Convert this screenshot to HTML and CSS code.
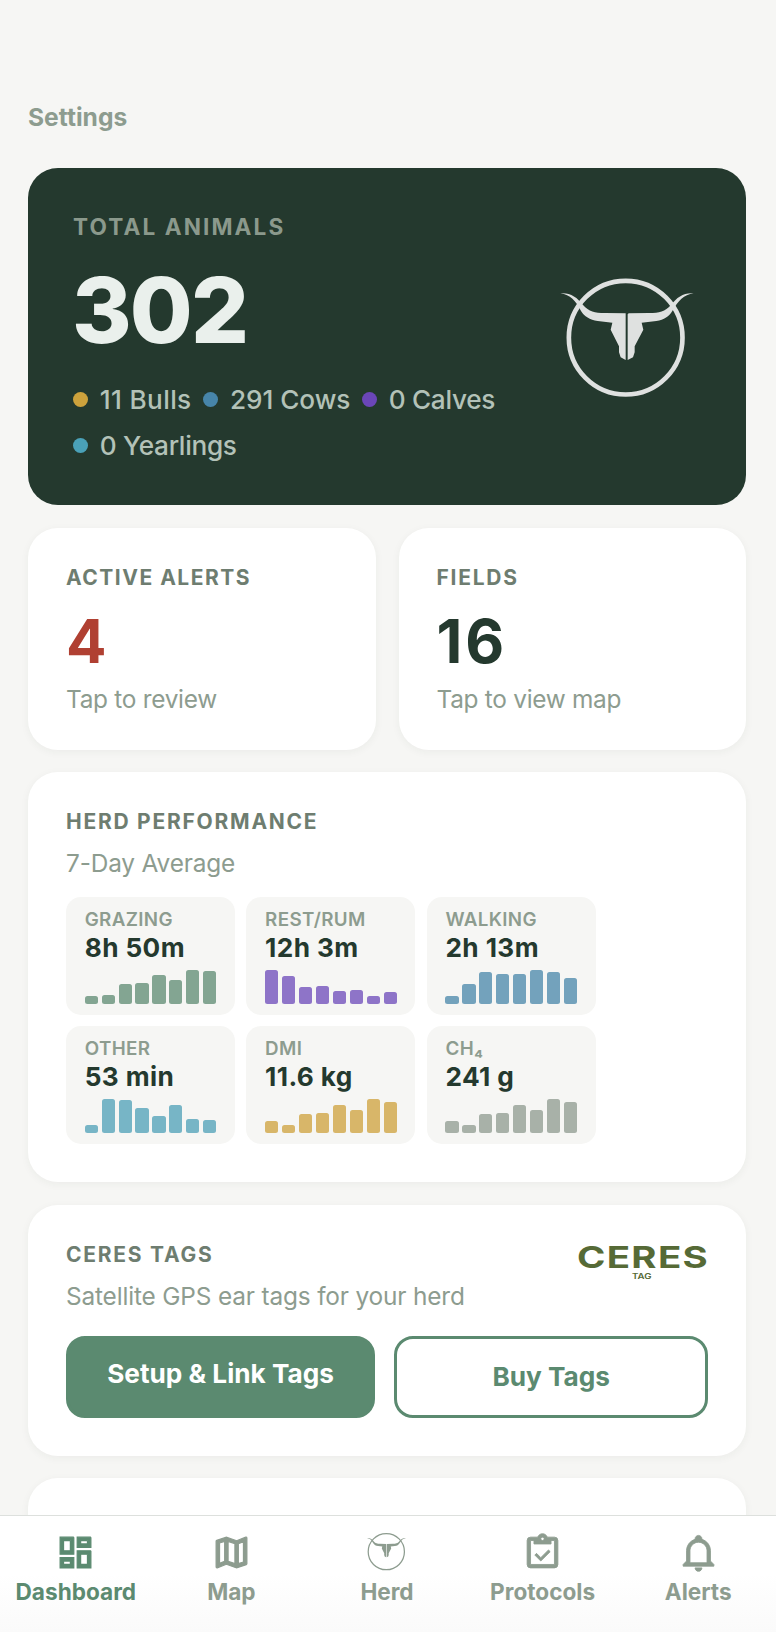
FILE: index.html
```
<!DOCTYPE html>
<html lang="en">
<head>
    <meta charset="UTF-8">
    <meta name="viewport" content="width=device-width, initial-scale=1.0">
    <title>Herd Dashboard</title>
    <link rel="stylesheet" href="styles.css">
</head>
<body>

<main class="content">
    <a class="settings">Settings</a>

    <section class="hero">
        <div class="hero-info">
            <div class="hero-label">TOTAL ANIMALS</div>
            <div class="hero-total">302</div>
            <div class="breakdown">
                <span class="stat"><i class="dot bulls"></i>11 Bulls</span>
                <span class="stat"><i class="dot cows"></i>291 Cows</span>
                <span class="stat"><i class="dot calves"></i>0 Calves</span>
                <span class="stat"><i class="dot yearlings"></i>0 Yearlings</span>
            </div>
        </div>
        <svg class="hero-logo" viewBox="58 50 408 364">
            <circle cx="258" cy="232" r="170.5" fill="none" stroke="currentColor" stroke-width="14"/>
            <g id="skull" fill="currentColor">
                <path d="M62 99C90 96 112 110 130 134C148 154 165 158 195 158L258 159V299L243 291L238 276V258L213 208L218 187L174 182C150 179 134 168 124 152C108 122 92 103 62 99Z"/>
                <path d="M462 99C434 96 412 110 394 134C376 154 359 158 329 158L267 159L264 162V299L280 291L285 276V258L311 208L306 187L350 182C374 179 388 168 398 152C416 122 432 103 462 99Z"/>
            </g>
        </svg>
    </section>

    <div class="row">
        <section class="card">
            <div class="label alerts">ACTIVE ALERTS</div>
            <div class="number red">4</div>
            <div class="hint">Tap to review</div>
        </section>
        <section class="card">
            <div class="label">FIELDS</div>
            <div class="number">16</div>
            <div class="hint">Tap to view map</div>
        </section>
    </div>

    <section class="card">
        <div class="label">HERD PERFORMANCE</div>
        <div class="subtitle">7-Day Average</div>
        <div class="tiles" id="tiles"></div>
    </section>

    <section class="card">
        <div class="card-head">
            <div>
                <div class="label">CERES TAGS</div>
                <div class="subtitle">Satellite GPS ear tags for your herd</div>
            </div>
            <svg class="ceres-logo" viewBox="0 -8 131 46">
                <text class="ceres-name" x="0" y="23" textLength="132" lengthAdjust="spacingAndGlyphs">CERES</text>
                <text class="ceres-tag" x="55" y="33.5" textLength="19.5" lengthAdjust="spacingAndGlyphs">TAG</text>
            </svg>
        </div>
        <div class="buttons">
            <button class="btn primary">Setup &amp; Link Tags</button>
            <button class="btn outline">Buy Tags</button>
        </div>
    </section>

    <section class="card"></section>
</main>

<nav class="tabs">
    <a class="tab active">
        <svg class="tab-icon bold" viewBox="0 0 24 24"><path d="M19,5V7H15V5H19M9,5V11H5V5H9M19,13V19H15V13H19M9,17V19H5V17H9M21,3H13V9H21V3M11,3H3V13H11V3M21,11H13V21H21V11M11,15H3V21H11V15Z"/></svg>
        Dashboard
    </a>
    <a class="tab">
        <svg class="tab-icon bold" viewBox="0 0 24 24"><path d="M20.5,3L20.34,3.03L15,5.1L9,3L3.36,4.9C3.15,4.97 3,5.15 3,5.38V20.5A0.5,0.5 0 0,0 3.5,21L3.66,20.97L9,18.9L15,21L20.64,19.1C20.85,19.03 21,18.85 21,18.62V3.5A0.5,0.5 0 0,0 20.5,3M10,5.47L14,6.87V18.53L10,17.13V5.47M5,6.46L8,5.45V17.15L5,18.31V6.46M19,17.54L16,18.55V6.86L19,5.7V17.54Z"/></svg>
        Map
    </a>
    <a class="tab">
        <svg class="tab-icon herd" viewBox="48 45 428 428">
            <circle cx="260" cy="250" r="189" fill="none" stroke="currentColor" stroke-width="13"/>
            <use href="#skull" transform="translate(0 10)"/>
        </svg>
        Herd
    </a>
    <a class="tab">
        <svg class="tab-icon" viewBox="0 0 24 24"><path d="M19,3H14.82C14.4,1.84 13.3,1 12,1C10.7,1 9.6,1.84 9.18,3H5A2,2 0 0,0 3,5V19A2,2 0 0,0 5,21H19A2,2 0 0,0 21,19V5A2,2 0 0,0 19,3M12,3A1,1 0 0,1 13,4A1,1 0 0,1 12,5A1,1 0 0,1 11,4A1,1 0 0,1 12,3M7,7H17V5H19V19H5V5H7V7M7.5,13.5L8.5,12.5L11,15L15.5,10.5L16.5,11.5L11,17L7.5,13.5Z"/></svg>
        Protocols
    </a>
    <a class="tab">
        <svg class="tab-icon" viewBox="0 0 24 24"><path d="M10 21H14C14 22.1 13.1 23 12 23S10 22.1 10 21M21 19V20H3V19L5 17V11C5 7.9 7.03 5.17 10 4.29C10 4.19 10 4.1 10 4C10 2.9 10.9 2 12 2S14 2.9 14 4C14 4.1 14 4.19 14 4.29C16.97 5.17 19 7.9 19 11V17L21 19M17 11C17 8.24 14.76 6 12 6S7 8.24 7 11V18H17V11Z"/></svg>
        Alerts
    </a>
</nav>

<script src="script.js"></script>
</body>
</html>
```
FILE: styles.css
```
* {
    box-sizing: border-box;
}
body {
    display: flex;
    flex-direction: column;
    height: 100vh;
    margin: 0;
    overflow: hidden;
    font-family: Inter, "Liberation Sans", sans-serif;
    color: #24392e;
    background-color: #f6f6f4;
}
.content {
    display: flex;
    flex: 1;
    flex-direction: column;
    gap: 22.7px;
    min-height: 0;
    padding: 102px 29.7px 0 28px;
    overflow: hidden;
}
.content > * {
    flex-shrink: 0;
}
.settings {
    margin-bottom: 13.3px;
    font-size: 24.6px;
    font-weight: 650;
    line-height: 30px;
    color: #8d9c8f;
}

/* total animals */
.hero {
    display: flex;
    align-items: center;
    justify-content: space-between;
    height: 337.3px;
    padding: 2px 51px 0 45px;
    border-radius: 30px;
    background-color: #24392e;
}
.hero-info {
    width: 440px;
}
.hero-label {
    font-size: 22.6px;
    font-weight: 650;
    line-height: 26px;
    letter-spacing: 2.1px;
    color: #8b998c;
}
.hero-total {
    margin-top: 25px;
    margin-left: -1px;
    font-size: 91px;
    font-weight: 800;
    line-height: 90px;
    letter-spacing: -1.9px;
    color: #eaf0ec;
}
.breakdown {
    display: flex;
    flex-wrap: wrap;
    gap: 12px 11.5px;
    margin-top: 28px;
    margin-bottom: -1px;
}
.stat {
    display: flex;
    align-items: center;
    gap: 11.5px;
    font-size: 26.2px;
    font-weight: 550;
    line-height: 34px;
    letter-spacing: -0.3px;
    color: #b3c2b8;
}
.stat:first-child {
    letter-spacing: 0.35px;
}
.stat:nth-child(2) {
    letter-spacing: -0.05px;
}
.dot {
    width: 15.3px;
    height: 15.3px;
    border-radius: 50%;
}
.bulls { background-color: #cda23c; }
.cows { background-color: #4785a9; }
.calves { background-color: #6b46b8; }
.yearlings { background-color: #4aa1b8; }
.hero-logo {
    width: 136px;
    height: 121.3px;
    color: #dfe1e0;
}

/* cards */
.row {
    display: grid;
    grid-template-columns: 1fr 1fr;
    gap: 22.7px;
}
.card {
    padding: 38px 38px 37.8px;
    border-radius: 30px;
    background-color: #fff;
    box-shadow: 0 2px 8px rgba(36, 57, 46, 0.05);
}
.row .card {
    padding-bottom: 35.6px;
}
.label {
    font-size: 21px;
    font-weight: 700;
    line-height: 23px;
    letter-spacing: 1.75px;
    color: #6e7d70;
}
.alerts {
    letter-spacing: 1.5px;
}
.number {
    margin-top: 22px;
    font-size: 60px;
    font-weight: 700;
    line-height: 60px;
    letter-spacing: 3px;
}
.red {
    color: #b04032;
}
.hint,
.subtitle {
    margin-top: 13px;
    font-size: 24.4px;
    line-height: 30px;
    letter-spacing: -0.28px;
    color: #8d9c8f;
}
.subtitle {
    margin-top: 15px;
    letter-spacing: -0.16px;
}

/* herd performance */
.tiles {
    display: grid;
    grid-template-columns: repeat(3, 169px);
    gap: 11.4px;
    margin-top: 18.4px;
}
.tile {
    height: 118.2px;
    padding: 12px 18.7px 0;
    border-radius: 15px;
    background-color: #f6f6f4;
}
.tile-name {
    font-size: 18.8px;
    font-weight: 600;
    line-height: 21px;
    letter-spacing: 0.35px;
    color: #8d9c8f;
}
.tile-value {
    margin-top: 1px;
    font-size: 26.2px;
    font-weight: 700;
    line-height: 34px;
    letter-spacing: 0.4px;
}
.bars {
    display: flex;
    align-items: flex-end;
    gap: 3.8px;
    height: 34px;
    margin-top: 5px;
}
.bar {
    flex: 1;
    border-radius: 2.5px;
}
.grazing .bar { background-color: #83a592; }
.rest .bar { background-color: #8e74c8; }
.walking .bar { background-color: #73a2bc; }
.other .bar { background-color: #77b5c6; }
.dmi .bar { background-color: #d8b669; }
.methane .bar { background-color: #a8b1a8; }

/* ceres tags */
.card-head {
    display: flex;
    justify-content: space-between;
    height: 68px;
}
.ceres-logo {
    width: 131px;
    height: 46px;
    margin-top: -6px;
    fill: #566a36;
}
.ceres-name {
    font-size: 29.4px;
    font-weight: 700;
    letter-spacing: 1px;
}
.ceres-tag {
    font-size: 7.6px;
    font-weight: 600;
}
.buttons {
    display: flex;
    gap: 19px;
    margin-top: 25px;
}
.btn {
    flex: 1 1 314px;
    height: 82px;
    padding: 0;
    border: 3px solid #5b8a70;
    border-radius: 19px;
    font-family: inherit;
    font-size: 26.2px;
    font-weight: 650;
    color: #5b8a70;
    background-color: #fff;
}
.primary {
    flex-basis: 309px;
    padding-bottom: 6px;
    color: #fff;
    background-color: #5b8a70;
}

/* bottom tabs */
.tabs {
    display: grid;
    grid-template-columns: repeat(5, 1fr);
    height: 117px;
    margin-left: -2px;
    border-top: 1px solid #dde0dd;
    background: linear-gradient(#fff 50%, #fafafa);
}
.tab {
    display: flex;
    flex-direction: column;
    align-items: center;
    gap: 5px;
    padding-top: 15.5px;
    font-size: 22.6px;
    font-weight: 650;
    line-height: 28px;
    color: #8d9c8f;
}
.tab.active {
    color: #5b8a70;
}
.tab-icon {
    width: 41px;
    height: 41px;
    fill: currentColor;
    stroke: currentColor;
    stroke-width: 0.5;
}
.bold {
    stroke-width: 0.7;
}
.herd {
    stroke-width: 0;
}
```
FILE: script.js
```
// bar heights are percentages of the tallest day
const metrics = [
    { id: 'grazing', name: 'GRAZING', value: '8h 50m', days: [23, 26, 59, 62, 84, 70, 100, 95] },
    { id: 'rest', name: 'REST/RUM', value: '12h 3m', days: [100, 82, 48, 51, 37, 40, 23, 34] },
    { id: 'walking', name: 'WALKING', value: '2h 13m', days: [23, 59, 93, 87, 87, 100, 93, 75] },
    { id: 'other', name: 'OTHER', value: '53 min', days: [23, 100, 98, 75, 51, 84, 42, 40] },
    { id: 'dmi', name: 'DMI', value: '11.6 kg', days: [37, 23, 56, 59, 84, 68, 100, 93] },
    { id: 'methane', name: 'CH₄', value: '241 g', days: [37, 23, 56, 59, 84, 68, 100, 93] }
];

document.getElementById('tiles').innerHTML = metrics.map(m => `
    <div class="tile ${m.id}">
        <div class="tile-name">${m.name}</div>
        <div class="tile-value">${m.value}</div>
        <div class="bars">${m.days.map(d => `<div class="bar" style="height: ${d}%"></div>`).join('')}</div>
    </div>`).join('');
```
